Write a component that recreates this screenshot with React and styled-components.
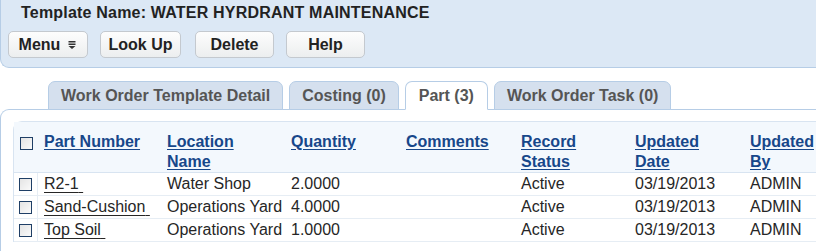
import React from "react";
import styled, { createGlobalStyle } from "styled-components";

const GlobalStyle = createGlobalStyle`
    body {
        margin: 0;
        background: #ffffff;
        font-family: "Liberation Sans", Arial, sans-serif;
    }
`;

const Page = styled.div`
    width: 816px;
    height: 251px;
    overflow: hidden;
    background: #ffffff;
`;

const Header = styled.div`
    height: 68px;
    padding: 3px 0 0 7px;
    box-sizing: border-box;
    background: #dce8f5;
    border-left: 1px solid #b6cde6;
    border-bottom: 1px solid #b6cde6;
    border-bottom-left-radius: 9px;
`;

const Title = styled.div`
    padding-left: 13px;
    font-size: 16px;
    font-weight: bold;
    letter-spacing: 0.2px;
    color: #222;
    line-height: 20px;
`;

const Toolbar = styled.div`
    display: flex;
    gap: 12px;
    margin-top: 8px;
`;

const Button = styled.button`
    height: 27px;
    width: ${(p) => p.$w}px;
    padding: 0;
    display: flex;
    align-items: center;
    justify-content: center;
    gap: 7px;
    font-family: "Liberation Sans", Arial, sans-serif;
    font-size: 16px;
    font-weight: bold;
    color: #222;
    border: 1px solid #c4c9cf;
    border-radius: 5px;
    background: linear-gradient(#fdfdfd, #eceeef);
`;

const Tabs = styled.div`
    display: flex;
    gap: 6px;
    padding-left: 48px;
    margin-top: 13px;
    align-items: flex-end;
    position: relative;
    z-index: 1;
`;

const Tab = styled.div`
    height: 27px;
    padding: 0 ${(p) => p.$pad}px;
    display: flex;
    align-items: center;
    font-size: 16px;
    font-weight: bold;
    color: #555;
    background: ${(p) => (p.$active ? "#ffffff" : "#d5e0ee")};
    border: 1px solid #b6cde6;
    border-bottom: ${(p) => (p.$active ? "1px solid #ffffff" : "1px solid #b6cde6")};
    border-radius: 7px 7px 0 0;
`;

const Panel = styled.div`
    margin-top: -1px;
    border-top: 1px solid #b6cde6;
    border-left: 1px solid #b6cde6;
    border-top-left-radius: 9px;
    padding: 11px 0 0 12px;
    height: 140px;
`;

const Grid = styled.div`
    border-top: 1px solid #d8e4f1;
    border-left: 1px solid #d8e4f1;
    border-top-left-radius: 9px;
`;

const Row = styled.div`
    display: grid;
    grid-template-columns: 24px 123px 124px 115px 115px 114px 115px 1fr;
    height: ${(p) => (p.$head ? 51 : 23)}px;
    background: ${(p) => (p.$head ? "#f3f8fd" : "#ffffff")};
    border-bottom: 1px solid ${(p) => (p.$head ? "#d8e4f1" : "#e6edf4")};
    font-size: 16px;
    line-height: 20px;
    box-sizing: border-box;
`;

const Cell = styled.div`
    padding: ${(p) => (p.$head ? "10px 0 0 6px" : "1px 0 0 6px")};
    white-space: nowrap;
    color: #262626;
`;

const BoxCell = styled.div`
    display: flex;
    justify-content: center;
    padding-top: ${(p) => (p.$head ? 15 : 5)}px;
    border-right: ${(p) => (p.$head ? "none" : "1px solid #e6edf4")};
`;

const Check = styled.span`
    width: 11px;
    height: 11px;
    border: 1px solid #1f3f66;
    background: linear-gradient(135deg, #e4e4e4, #fafafa);
`;

const HeadLink = styled.a`
    color: #17478a;
    font-weight: bold;
    text-decoration: underline;
    text-underline-offset: 2px;
`;

const PartLink = styled.a`
    color: #262626;
    text-decoration: underline;
    text-underline-offset: 3px;
`;

const MenuIcon = () => (
    <svg width="10" height="10" viewBox="0 0 10 10">
        <rect x="1.5" y="1" width="7" height="1.5" fill="#333" />
        <rect x="1.5" y="3.5" width="7" height="1.5" fill="#333" />
        <polygon points="1.5,6 8.5,6 5,9" fill="#333" />
    </svg>
);

const columns = [
    ["Part Number"],
    ["Location", "Name"],
    ["Quantity"],
    ["Comments"],
    ["Record", "Status"],
    ["Updated", "Date"],
    ["Updated", "By"],
];

const parts = [
    { part: "R2-1", location: "Water Shop", qty: "2.0000" },
    { part: "Sand-Cushion", location: "Operations Yard", qty: "4.0000" },
    { part: "Top Soil", location: "Operations Yard", qty: "1.0000" },
];

function App() {
    return (
        <Page>
            <GlobalStyle />
            <Header>
                <Title>Template Name: WATER HYRDRANT MAINTENANCE</Title>
                <Toolbar>
                    <Button $w={80}>Menu <MenuIcon /></Button>
                    <Button $w={81} style={{ marginRight: 2 }}>Look Up</Button>
                    <Button $w={79}>Delete</Button>
                    <Button $w={79}>Help</Button>
                </Toolbar>
            </Header>
            <Tabs>
                <Tab $pad={12}>Work Order Template Detail</Tab>
                <Tab $pad={12}>Costing (0)</Tab>
                <Tab $pad={13} $active>Part (3)</Tab>
                <Tab $pad={12}>Work Order Task (0)</Tab>
            </Tabs>
            <Panel>
                <Grid>
                    <Row $head>
                        <BoxCell $head><Check /></BoxCell>
                        {columns.map((lines) => (
                            <Cell $head key={lines.join(" ")}>
                                {lines.map((l) => (
                                    <div key={l}><HeadLink>{l}</HeadLink></div>
                                ))}
                            </Cell>
                        ))}
                    </Row>
                    {parts.map((p) => (
                        <Row key={p.part}>
                            <BoxCell><Check /></BoxCell>
                            <Cell><PartLink>{p.part}&nbsp;</PartLink></Cell>
                            <Cell>{p.location}</Cell>
                            <Cell>{p.qty}</Cell>
                            <Cell></Cell>
                            <Cell>Active</Cell>
                            <Cell>03/19/2013</Cell>
                            <Cell>ADMIN</Cell>
                        </Row>
                    ))}
                </Grid>
            </Panel>
        </Page>
    );
}

export default App;
